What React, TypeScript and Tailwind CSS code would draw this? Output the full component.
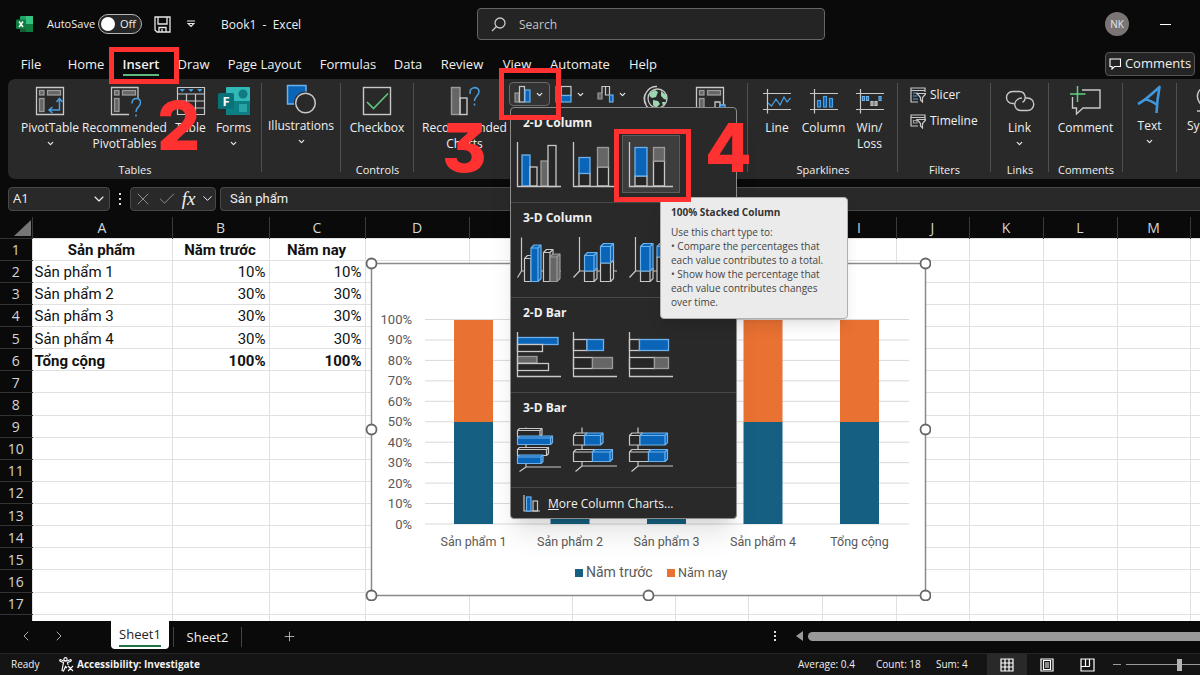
import type { ReactNode } from 'react';
import { ChevronDown, ChevronLeft, ChevronRight, Check, X, Plus } from 'lucide-react';
import { clsx } from 'clsx';

const BLUE = '#0a64b8';
const SKY = '#6db1ec';
const LINE = '#c8c8c8';
const GRAY = '#666666';

const TABS = [
  { label: 'File', width: 'w-[46px]' },
  { label: 'Home', width: 'w-[64px]' },
  { label: 'Insert', width: 'w-[46px]' },
  { label: 'Draw', width: 'w-[59px]' },
  { label: 'Page Layout', width: 'w-[83px]' },
  { label: 'Formulas', width: 'w-[84px]' },
  { label: 'Data', width: 'w-[36px]' },
  { label: 'Review', width: 'w-[72px]' },
  { label: 'View', width: 'w-[38px]' },
  { label: 'Automate', width: 'w-[88px]' },
  { label: 'Help', width: 'w-[38px]' },
];

const COLUMNS = [
  { name: 'A', width: 'w-[140px]' },
  { name: 'B', width: 'w-[97px]' },
  { name: 'C', width: 'w-[96px]' },
  { name: 'D', width: 'w-[104px]' },
  { name: 'E', width: 'w-[103px]' },
  { name: 'F', width: 'w-[103px]' },
  { name: 'G', width: 'w-[73px]' },
  { name: 'H', width: 'w-[74px]' },
  { name: 'I', width: 'w-[74px]' },
  { name: 'J', width: 'w-[73px]' },
  { name: 'K', width: 'w-[74px]' },
  { name: 'L', width: 'w-[74px]' },
  { name: 'M', width: 'w-[73px]' },
  { name: 'N', width: 'w-[74px]' },
];

const CELLS = [
  ['Sản phẩm', 'Năm trước', 'Năm nay'],
  ['Sản phẩm 1', '10%', '10%'],
  ['Sản phẩm 2', '30%', '30%'],
  ['Sản phẩm 3', '30%', '30%'],
  ['Sản phẩm 4', '30%', '30%'],
  ['Tổng cộng', '100%', '100%'],
];

const CATEGORIES = ['Sản phẩm 1', 'Sản phẩm 2', 'Sản phẩm 3', 'Sản phẩm 4', 'Tổng cộng'];

/* ---------- chart type drawings ---------- */

type Tone = 'blue' | 'gray' | 'none';

function paint(tone: Tone) {
  return {
    fill: tone === 'blue' ? BLUE : tone === 'gray' ? GRAY : '#262626',
    stroke: tone === 'blue' ? SKY : tone === 'gray' ? '#9a9a9a' : LINE,
  };
}

type FlatBar = [number, number, number, number, Tone];

function FlatChart({ bars }: { bars: FlatBar[] }) {
  return (
    <svg width="56" height="56" viewBox="0 0 56 56" fill="none" strokeWidth="1.3" aria-hidden="true">
      {bars.map(([x, y, w, h, tone], i) => (
        <rect key={i} x={x} y={y} width={w} height={h} {...paint(tone)} />
      ))}
      <path d="M6.5 6V50.5H50" stroke={LINE} />
    </svg>
  );
}

// [x, y, width, height, depth, tone]
type Block = [number, number, number, number, number, Tone];

function SolidChart({ blocks, axis }: { blocks: Block[]; axis: string }) {
  return (
    <svg width="56" height="56" viewBox="0 0 56 56" fill="none" strokeWidth="1.2" strokeLinejoin="round" aria-hidden="true">
      <path d={axis} stroke={LINE} />
      {blocks.map(([x, y, w, h, d, tone], i) => (
        <g key={i} {...paint(tone)}>
          <path d={`M${x} ${y}l${d} ${-d}h${w}v${h}l${-d} ${d}h${-w}z`} />
          <path d={`M${x} ${y}h${w}v${h}M${x + w} ${y}l${d} ${-d}`} fill="none" />
        </g>
      ))}
    </svg>
  );
}

const COLUMN_AXIS = 'M12.5 6V40H50M12.5 40L6.5 46.5';
const BAR_AXIS = 'M15 6.5V45H50M15 45L8.5 50.5';

const SECTIONS: { title: string; charts: { name: string; art: ReactNode }[] }[] = [
  {
    title: '2-D Column',
    charts: [
      {
        name: 'Clustered Column',
        art: <FlatChart bars={[[11, 19, 8, 31, 'blue'], [19, 31, 7, 19, 'none'], [30, 25, 7, 25, 'gray'], [37, 9.5, 8, 41, 'none']]} />,
      },
      {
        name: 'Stacked Column',
        art: <FlatChart bars={[[12, 37, 11, 13, 'none'], [12, 21.5, 11, 16, 'blue'], [30.5, 31, 11, 19, 'none'], [30.5, 11.5, 11, 19.5, 'gray']]} />,
      },
      {
        name: '100% Stacked Column',
        art: <FlatChart bars={[[12, 40, 12, 10, 'none'], [12, 11.5, 12, 28.5, 'blue'], [30.5, 25, 11, 25, 'none'], [30.5, 11.5, 11, 13.5, 'gray']]} />,
      },
    ],
  },
  {
    title: '3-D Column',
    charts: [
      {
        name: '3-D Clustered Column',
        art: (
          <SolidChart
            axis="M10.5 6.5V40H50M10.5 40L6.5 46.5"
            blocks={[[13.5, 27.5, 6.5, 23, 3, 'none'], [20, 17, 7, 33.5, 3, 'blue'], [32.5, 21.5, 6.5, 29, 3, 'none'], [39, 26, 7, 24.5, 3, 'gray']]}
          />
        ),
      },
      {
        name: '3-D Stacked Column',
        art: (
          <SolidChart
            axis={COLUMN_AXIS}
            blocks={[[17.5, 40, 9.5, 10.5, 3, 'none'], [17.5, 24.5, 9.5, 15.5, 3, 'blue'], [33.5, 32, 10, 18.5, 3, 'none'], [33.5, 15.5, 10, 16.5, 3, 'blue']]}
          />
        ),
      },
      {
        name: '3-D 100% Stacked Column',
        art: (
          <SolidChart
            axis={COLUMN_AXIS}
            blocks={[[17.5, 40, 9.5, 10.5, 3, 'none'], [17.5, 15.5, 9.5, 24.5, 3, 'blue'], [34, 26, 9.5, 24.5, 3, 'none'], [34, 15.5, 9.5, 10.5, 3, 'blue']]}
          />
        ),
      },
    ],
  },
  {
    title: '2-D Bar',
    charts: [
      {
        name: 'Clustered Bar',
        art: <FlatChart bars={[[6.5, 11.5, 40.5, 7, 'blue'], [6.5, 18.5, 25, 7, 'none'], [6.5, 30.5, 19.5, 6.5, 'gray'], [6.5, 37.5, 31, 7, 'none']]} />,
      },
      {
        name: 'Stacked Bar',
        art: <FlatChart bars={[[6.5, 13.5, 13.5, 11, 'none'], [20, 13.5, 16.5, 11, 'blue'], [6.5, 31.5, 19, 11, 'none'], [25.5, 31.5, 20, 11, 'gray']]} />,
      },
      {
        name: '100% Stacked Bar',
        art: <FlatChart bars={[[6.5, 13.5, 10, 11, 'none'], [16.5, 13.5, 29, 11, 'blue'], [6.5, 31.5, 25, 11, 'none'], [31.5, 31.5, 14, 11, 'gray']]} />,
      },
    ],
  },
  {
    title: '3-D Bar',
    charts: [
      {
        name: '3-D Clustered Bar',
        art: (
          <SolidChart
            axis="M15 6.5V46H50M15 46L8.5 50.5"
            blocks={[[6.5, 9.5, 22.5, 6, 2, 'none'], [6.5, 17, 33, 6.5, 2, 'blue'], [6.5, 28.5, 29, 6, 2, 'none'], [6.5, 36, 23.5, 6.5, 2, 'blue']]}
          />
        ),
      },
      {
        name: '3-D Stacked Bar',
        art: (
          <SolidChart
            axis={BAR_AXIS}
            blocks={[[6.5, 14.5, 11, 9.5, 2.5, 'none'], [17.5, 14.5, 16, 9.5, 2.5, 'blue'], [6.5, 31, 19, 9.5, 2.5, 'none'], [25.5, 31, 17.5, 9.5, 2.5, 'blue']]}
          />
        ),
      },
      {
        name: '3-D 100% Stacked Bar',
        art: (
          <SolidChart
            axis={BAR_AXIS}
            blocks={[[6.5, 14.5, 10.5, 9.5, 2.5, 'none'], [17, 14.5, 25, 9.5, 2.5, 'blue'], [6.5, 31, 19, 9.5, 2.5, 'none'], [25.5, 31, 16.5, 9.5, 2.5, 'blue']]}
          />
        ),
      },
    ],
  },
];

/* ---------- ribbon icons ---------- */

function PivotIcon({ question = false, chart = false }: { question?: boolean; chart?: boolean }) {
  return (
    <svg width="32" height="32" viewBox="0 0 32 32" fill="none" stroke={LINE} strokeWidth="1.3" aria-hidden="true">
      <path d={question ? 'M20 29.5H2.5V2.5H29V14' : 'M2.5 2.5H29.5V29.5H2.5z'} />
      <rect x="5.5" y="5.5" width="4.5" height="4.5" fill={GRAY} stroke="#9a9a9a" />
      <rect x="13.5" y="5.5" width="13" height="4.5" fill={GRAY} stroke="#9a9a9a" />
      <rect x="5.5" y="13.5" width="4.5" height="13" fill={GRAY} stroke="#9a9a9a" />
      {!question && !chart && (
        <path d="M25.5 14V25H15.5M22.5 17L25.5 13.5L28.5 17M18.5 22L15 25L18.5 28" stroke="#4a9fe0" strokeWidth="1.5" />
      )}
      {question && (
        <path d="M23 18.5C23 11.5 32 12 31.5 18C31.2 22 27 22 27 27M27 29.5V31.5" stroke="#4a9fe0" strokeWidth="1.5" />
      )}
      {chart && (
        <>
          <path d="M21 30V17H26V30" fill="#292929" />
          <path d="M26 30V20H31V30" fill={BLUE} stroke={SKY} />
        </>
      )}
    </svg>
  );
}

function TableIcon() {
  return (
    <svg width="32" height="32" viewBox="0 0 32 32" fill="none" stroke={LINE} strokeWidth="1.2" aria-hidden="true">
      <path d="M2.5 2.5H29.5V29.5H2.5zM2.5 9H29.5M2.5 16H29.5M2.5 23H29.5M11.5 9V29.5M20.5 9V29.5" />
      <path d="M4.5 4H10L7.2 7zM13.2 4H18.8L16 7zM22 4H27.5L24.8 7z" fill="#4a9fe0" stroke="none" />
    </svg>
  );
}

function FormsIcon() {
  return (
    <svg width="32" height="32" viewBox="0 0 32 32" aria-hidden="true">
      <rect x="8" y="2" width="24" height="28" rx="1" fill="#31b8b8" />
      <path d="M8 16H32V29A1 1 0 0 1 31 30H9A1 1 0 0 1 8 29z" fill="#0b7f84" />
      <circle cx="25" cy="9" r="4.5" fill="#117b80" />
      <rect x="21" y="19" width="8" height="8" fill="#27a3a5" />
      <rect x="0" y="8" width="16" height="16" rx="1.5" fill="#087278" />
      <text x="8" y="20.5" textAnchor="middle" fontSize="13" fontWeight="700" fill="#fff" fontFamily="'Open Sans', sans-serif">F</text>
    </svg>
  );
}

function ShapesIcon() {
  return (
    <svg width="32" height="32" viewBox="0 0 32 32" strokeWidth="1.5" aria-hidden="true">
      <rect x="2.5" y="2.5" width="18.5" height="18.5" fill={BLUE} stroke={SKY} />
      <circle cx="20.5" cy="20" r="11.5" fill="#292929" />
      <circle cx="20.5" cy="20" r="9.8" fill="#292929" stroke={LINE} />
    </svg>
  );
}

function CheckboxIcon() {
  return (
    <svg width="32" height="32" viewBox="0 0 32 32" fill="none" strokeWidth="1.4" aria-hidden="true">
      <rect x="2.5" y="2.5" width="27" height="27" stroke={LINE} />
      <path d="M6 17L12.5 23.5L27 8.5" stroke="#5fc27e" strokeWidth="1.7" />
    </svg>
  );
}

function RecommendedChartsIcon() {
  return (
    <svg width="32" height="32" viewBox="0 0 32 32" fill="none" stroke={LINE} strokeWidth="1.4" aria-hidden="true">
      <rect x="2.5" y="2.5" width="8.5" height="27" fill={GRAY} stroke="#9a9a9a" />
      <rect x="11" y="13" width="7" height="16.5" />
      <path d="M21 9C20 1 30 1 30 6.5C30 11 25.5 11 25.5 16M25.5 18.5V20.5" stroke="#4a9fe0" strokeWidth="1.6" />
    </svg>
  );
}

function SparklineIcon({ kind }: { kind: 'line' | 'column' | 'winloss' }) {
  return (
    <svg width="30" height="32" viewBox="0 0 30 32" fill="none" stroke={LINE} strokeWidth="1.2" aria-hidden="true">
      <path d="M1 8.5H29M1 24.5H29M5.5 4V28.5" />
      {kind === 'line' && <path d="M6 18L9.5 21L14 14L18 20L22 12L25 17L28.5 13" stroke="#4a9fe0" />}
      {kind === 'column' && (
        <g fill={BLUE} stroke="#4a9fe0">
          <rect x="8.5" y="15.5" width="3" height="6.5" />
          <rect x="14.5" y="11.5" width="3" height="10.5" />
          <rect x="20.5" y="13.5" width="3" height="8.5" />
        </g>
      )}
      {kind === 'winloss' && (
        <>
          <path d="M7.5 11.5h2v4h-2zM11.5 11.5h2v4h-2zM24 11.5h2v4h-2z" stroke={SKY} fill={BLUE} />
          <path d="M16 16.5h2v4h-2zM20 16.5h2v4h-2z" fill="#777" />
        </>
      )}
    </svg>
  );
}

function FilterIcon({ blue = false }: { blue?: boolean }) {
  return (
    <svg width="16" height="16" viewBox="0 0 16 16" fill="none" stroke={LINE} strokeWidth="1.2" aria-hidden="true">
      <path d={blue ? 'M8 15H1V1H15V5M1 3.5H15' : 'M8 13H1V2H15V6M1 4.5H15'} />
      <path d={blue ? 'M3 6H8M3 9H7M3 12H8' : 'M3.5 7.5H7V10H3.5z'} stroke={blue ? '#4a9fe0' : '#9a9a9a'} />
      <path d="M7 6.5H16L12.5 10.5V15L10.5 13V10.5z" fill="#292929" />
    </svg>
  );
}

function LinkIcon() {
  return (
    <svg width="32" height="32" viewBox="0 0 32 32" fill="none" stroke={LINE} strokeWidth="1.4" aria-hidden="true">
      <path d="M10.5 18.5H8.5A6 6 0 0 1 8.5 6.5H15.5A6 6 0 0 1 18.5 17.5" />
      <path d="M21.5 13H23.5A6 6 0 0 1 23.5 25.5H16.5A6 6 0 0 1 13.5 14.5C14.5 13.5 16 13 18 13" />
    </svg>
  );
}

function CommentIcon() {
  return (
    <svg width="32" height="32" viewBox="0 0 32 32" fill="none" stroke={LINE} strokeWidth="1.4" aria-hidden="true">
      <path d="M12 5H30V23H13L6.5 29V23H2.5V12" />
      <path d="M7.5 1V17M0 9H15.5" stroke="#5fd07f" strokeWidth="1.5" />
    </svg>
  );
}

function TextIcon() {
  return (
    <svg width="32" height="32" viewBox="0 0 32 32" fill="none" stroke="#3f97dd" strokeWidth="2.6" strokeLinejoin="round" aria-hidden="true">
      <path d="M4 21C10 18 18 11 25.5 4C24 12 23 20 22.5 30M10.5 16.5C15 16.5 19 19 23.5 22" />
    </svg>
  );
}

function OmegaIcon() {
  return (
    <svg width="32" height="32" viewBox="0 0 32 32" fill="none" stroke={LINE} strokeWidth="1.6" aria-hidden="true">
      <path d="M2 28H11V25C-2 18 0 3 16 3S34 18 21 25V28H30" />
    </svg>
  );
}

function GlobeIcon() {
  return (
    <svg width="28" height="28" viewBox="0 0 28 28" fill="none" aria-hidden="true">
      <path d="M4 20A12 12 0 0 1 15 2.5M3 10A12 12 0 0 0 8 25" stroke={LINE} strokeWidth="1.3" />
      <circle cx="15.5" cy="14.5" r="9.5" fill="#292929" stroke={LINE} strokeWidth="1.3" />
      <path d="M8 9L13 6L16 8L14 13L10 14L7.5 12zM19 7L24 11L25 16L22 15L19 12zM11 16L16 17L18 20L14 24L11 21zM20 18L24 18L21 22z" fill="#9bd8ae" />
    </svg>
  );
}

/* ---------- shared pieces ---------- */

function Group({ label, className, children }: { label?: string; className: string; children: ReactNode }) {
  return (
    <section className={clsx('relative flex shrink-0 flex-col', className)}>
      <div className="flex flex-1 items-start">{children}</div>
      <div className="text-center text-[11px] leading-[18px]">{label}</div>
      <span className="absolute top-[4px] right-0 bottom-[7px] w-px bg-[#505050]" />
    </section>
  );
}

interface ToolProps {
  icon: ReactNode;
  label: string;
  second?: string;
  menu?: boolean;
  className: string;
}

function Tool({ icon, label, second, menu, className }: ToolProps) {
  return (
    <button className={clsx('flex shrink-0 flex-col items-center pr-[1px] text-[12px] leading-[16px] whitespace-nowrap', className)}>
      {icon}
      <span className="mt-[3px]">{label}</span>
      {second && <span>{second}</span>}
      {menu && <ChevronDown size={9} strokeWidth={3} className="mt-[3px]" />}
    </button>
  );
}

function TitleBar() {
  return (
    <header className="flex h-[48px] shrink-0 items-center">
      <div className="flex w-[477px] shrink-0 items-center pl-[16px]">
        <svg width="17" height="16" viewBox="0 0 17 16" aria-label="Excel" role="img">
          <rect x="4" width="13" height="16" rx="1" fill="#21a366" />
          <path d="M10 0H16A1 1 0 0 1 17 1V8H10z" fill="#33c481" />
          <path d="M4 8H10V16H5A1 1 0 0 1 4 15z" fill="#185c37" />
          <path d="M10 8H17V15A1 1 0 0 1 16 16H10z" fill="#107c41" />
          <rect y="3.5" width="10" height="9.5" rx="1" fill="#107c41" />
          <path d="M3 5.5L7 11M7 5.5L3 11" stroke="#fff" strokeWidth="1.5" />
        </svg>
        <span className="ml-[14px] w-[51px] text-[11px]">AutoSave</span>
        <button role="switch" aria-checked="false" aria-label="AutoSave" className="flex h-[20px] w-[44px] items-center gap-[5px] rounded-full border border-[#b5b5b5] bg-[#262626] pl-[2px] text-[11px]">
          <span className="size-[14px] rounded-full bg-white" />
          Off
        </button>
        <button aria-label="Save" className="ml-[12px]">
          <svg width="17" height="17" viewBox="0 0 17 17" fill="none" stroke="#e8e8e8" strokeWidth="1.3" aria-hidden="true">
            <path d="M1 1H16V16H3L1 14zM4 1V8H13V1M5 16V11.5H12V16M8 13V16" />
          </svg>
        </button>
        <button aria-label="Customize Quick Access Toolbar" className="ml-[16px]">
          <svg width="8" height="8" viewBox="0 0 8 8" fill="none" stroke="#e8e8e8" strokeWidth="1.2" aria-hidden="true">
            <path d="M0 1H8M1 3.5H7L4 6.5z" />
          </svg>
        </button>
        <span className="ml-[26px] pt-[2px] text-[12px] whitespace-pre">Book1  -  Excel</span>
      </div>
      <label className="flex h-[32px] w-[348px] shrink-0 items-center gap-[13px] rounded-[4px] border border-[#666] bg-[#242424] pl-[13px]">
        <svg width="15" height="15" viewBox="0 0 15 15" fill="none" stroke="#c8c8c8" strokeWidth="1.3" aria-hidden="true">
          <circle cx="9" cy="6" r="5" />
          <path d="M5.5 9.5L1 14" />
        </svg>
        <input aria-label="Search" placeholder="Search" className="min-w-0 flex-1 bg-transparent pt-[2px] text-[12px] outline-none placeholder:text-[#c4c4c4]" />
      </label>
      <div className="ml-auto flex items-center gap-[31px] pr-[29px]">
        <span className="flex size-[24px] items-center justify-center rounded-full bg-[#7a7574] text-[10px] text-[#e8e8e8]">NK</span>
        <button aria-label="Minimize" className="h-[3px] w-[11px]">
          <span className="block h-px bg-white" />
        </button>
      </div>
    </header>
  );
}

function TabRow() {
  return (
    <nav className="flex h-[31px] shrink-0 items-center pl-[8px] text-[13px]">
      {TABS.map(({ label, width }) => {
        const active = label === 'Insert';
        return (
          <button key={label} className={clsx('flex h-[24px] shrink-0 justify-center whitespace-nowrap', width, active && 'font-semibold')}>
            <span className={clsx('h-[24px] leading-[24px]', active && 'border-b-2 border-[#5fb87f]')}>{label}</span>
          </button>
        );
      })}
      <button className="mr-[5px] ml-auto flex h-[24px] w-[90px] shrink-0 items-center justify-center gap-[4px] rounded-[4px] border border-[#555] bg-[#242424]">
        <svg width="12" height="12" viewBox="0 0 12 12" fill="none" stroke="#fff" strokeWidth="1.1" aria-hidden="true">
          <path d="M1 1H11.5V8.5H5.5L3 11V8.5H1z" />
        </svg>
        Comments
      </button>
    </nav>
  );
}

function ChartTooltip() {
  return (
    <div role="tooltip" className="absolute top-[61px] left-[37px] z-30 w-[188px] rounded-[4px] border border-[#b0b0b0] bg-[#ebebeb] px-[10px] pt-[7px] pb-[9px] text-left text-[10px] leading-[14px] whitespace-nowrap text-[#444] shadow-lg">
      <p className="pb-[6px] font-bold text-[#333]">100% Stacked Column</p>
      <p>Use this chart type to:</p>
      <p>• Compare the percentages that</p>
      <p>each value contributes to a total.</p>
      <p>• Show how the percentage that</p>
      <p>each value contributes changes</p>
      <p>over time.</p>
    </div>
  );
}

function ChartMenu() {
  return (
    <div className="absolute top-[25px] left-[1px] z-20 w-[227px] rounded-[4px] border border-[#8c8c8c] bg-[#292929] shadow-xl">
      {SECTIONS.map(({ title, charts }) => (
        <section key={title} className="h-[95px] border-b border-[#484848]">
          <h3 className="h-[28px] pt-[1px] pl-[12px] text-[12px] leading-[28px] font-bold">{title}</h3>
          <div className="flex">
            {charts.map(({ name, art }) => (
              <div key={name} className="relative">
                <button aria-label={name} className={clsx('block size-[56px]', name === '100% Stacked Column' && 'bg-[#3d3d3d] outline outline-[#5c5c5c]')}>
                  {art}
                </button>
                {name === '100% Stacked Column' && <ChartTooltip />}
              </div>
            ))}
          </div>
        </section>
      ))}
      <button className="flex h-[30px] w-full items-center gap-[8px] pl-[12px] text-[12px]">
        <svg width="17" height="17" viewBox="0 0 17 17" fill="none" stroke={LINE} strokeWidth="1.2" aria-hidden="true">
          <path d="M1 0V16H17" />
          <rect x="3.5" y="2" width="4.5" height="14" fill={BLUE} stroke={SKY} />
          <rect x="10" y="6" width="4.5" height="10" />
        </svg>
        <span className="pt-[1px]"><u>M</u>ore Column Charts...</span>
      </button>
    </div>
  );
}

function Ribbon() {
  return (
    <div className="ml-[8px] flex h-[100px] shrink-0 rounded-l-[7px] bg-[#292929]">
      <Group label="Tables" className="w-[254px]">
        <div className="flex pt-[6px] pl-[12px]">
          <Tool className="w-[61px]" icon={<PivotIcon />} label="PivotTable" menu />
          <Tool className="w-[88px]" icon={<PivotIcon question />} label="Recommended" second="PivotTables" />
          <Tool className="w-[44px]" icon={<TableIcon />} label="Table" />
          <Tool className="w-[42px]" icon={<FormsIcon />} label="Forms" menu />
        </div>
      </Group>
      <Group className="w-[79px]">
        <Tool className="w-full pt-[4px]" icon={<ShapesIcon />} label="Illustrations" menu />
      </Group>
      <Group label="Controls" className="w-[73px]">
        <Tool className="w-full pt-[6px]" icon={<CheckboxIcon />} label="Checkbox" />
      </Group>
      <Group className="w-[334px]">
        <Tool className="ml-[7px] w-[88px] pt-[6px]" icon={<RecommendedChartsIcon />} label="Recommended" second="Charts" />
        <div className="relative pt-[3px]">
          <div className="relative">
            <button aria-label="Insert Column or Bar Chart" className="flex h-[24px] w-[41px] items-center justify-center gap-[4px] rounded-[4px] border border-[#6a6a6a] bg-[#333] pr-[2px]">
              <svg width="17" height="18" viewBox="0 0 17 18" fill="none" strokeWidth="1.2" aria-hidden="true">
                <rect x="1" y="8" width="4" height="9" fill={GRAY} stroke="#9a9a9a" />
                <rect x="5.5" y="1.5" width="5" height="15.5" stroke={LINE} />
                <rect x="11" y="5" width="5" height="12" fill={BLUE} stroke={SKY} />
              </svg>
              <ChevronDown size={9} strokeWidth={3} />
            </button>
            <ChartMenu />
          </div>
        </div>
        <div className="flex pt-[3px]">
          <button aria-label="Insert Hierarchy Chart" className="flex h-[24px] w-[42px] items-center justify-center gap-[4px] pr-[3px]">
            <svg width="17" height="18" viewBox="0 0 17 18" fill="none" strokeWidth="1.2" aria-hidden="true">
              <rect x="1" y="1.5" width="5" height="15.5" fill={GRAY} stroke="#9a9a9a" />
              <rect x="6" y="1.5" width="10" height="9" stroke={LINE} />
              <rect x="6" y="10.5" width="10" height="6.5" fill={BLUE} stroke={SKY} />
            </svg>
            <ChevronDown size={9} strokeWidth={3} />
          </button>
          <button aria-label="Insert Waterfall Chart" className="flex h-[24px] w-[42px] items-center justify-center gap-[4px] pr-[3px]">
            <svg width="17" height="18" viewBox="0 0 17 18" fill="none" strokeWidth="1.2" aria-hidden="true">
              <path d="M1 8H5V14H1z" fill={GRAY} stroke="#9a9a9a" />
              <path d="M5 8V1.5H8.5V6M8.5 1.5H12.5V10H8.5z" stroke={LINE} />
              <rect x="12.5" y="10" width="3.5" height="7" fill={BLUE} stroke={SKY} />
            </svg>
            <ChevronDown size={9} strokeWidth={3} />
          </button>
        </div>
        <button aria-label="Maps" className="ml-[8px] pt-[5px]"><GlobeIcon /></button>
        <button aria-label="PivotChart" className="ml-[24px] pt-[6px]"><PivotIcon chart /></button>
      </Group>
      <Group label="Sparklines" className="w-[150px]">
        <div className="flex pt-[6px] pl-[6px]">
          <Tool className="w-[47px]" icon={<SparklineIcon kind="line" />} label="Line" />
          <Tool className="w-[46px]" icon={<SparklineIcon kind="column" />} label="Column" />
          <Tool className="w-[46px]" icon={<SparklineIcon kind="winloss" />} label="Win/" second="Loss" />
        </div>
      </Group>
      <Group label="Filters" className="w-[93px]">
        <div className="flex flex-col gap-[10px] pt-[8px] pl-[12px] text-[12px] leading-[16px]">
          <button className="flex items-center gap-[4px]"><FilterIcon blue />Slicer</button>
          <button className="flex items-center gap-[4px]"><FilterIcon />Timeline</button>
        </div>
      </Group>
      <Group label="Links" className="w-[58px]">
        <Tool className="w-full pt-[6px]" icon={<LinkIcon />} label="Link" menu />
      </Group>
      <Group label="Comments" className="w-[74px]">
        <Tool className="w-full pt-[6px]" icon={<CommentIcon />} label="Comment" />
      </Group>
      <Group className="w-[54px]">
        <Tool className="w-full pt-[4px]" icon={<TextIcon />} label="Text" menu />
      </Group>
      <Group className="w-[68px]">
        <Tool className="w-full pt-[4px]" icon={<OmegaIcon />} label="Symbols" menu />
      </Group>
    </div>
  );
}

function FormulaBar() {
  return (
    <div className="flex h-[38px] shrink-0 items-center pt-[1px] pl-[8px] text-[13px]">
      <label className="flex h-[24px] w-[102px] shrink-0 items-center rounded-[4px] border border-[#484848] bg-[#292929] pr-[2px] pl-[4px]">
        <input aria-label="Name Box" defaultValue="A1" className="min-w-0 flex-1 bg-transparent text-[13px] outline-none" />
        <ChevronDown size={16} strokeWidth={1.6} />
      </label>
      <span className="mx-[9px] flex w-[2px] flex-col gap-[3px]">
        <i className="size-[2px] bg-[#ddd]" />
        <i className="size-[2px] bg-[#ddd]" />
        <i className="size-[2px] bg-[#ddd]" />
      </span>
      <div className="flex h-[24px] w-[86px] shrink-0 items-center justify-between rounded-[4px] border border-[#484848] bg-[#292929] pl-[2px]">
        <button aria-label="Cancel"><X size={20} strokeWidth={1.2} color="#8c8c8c" /></button>
        <button aria-label="Enter"><Check size={20} strokeWidth={1.2} color="#8c8c8c" /></button>
        <button aria-label="Insert Function" className="font-['Liberation_Serif',serif] text-[19px] leading-[20px] italic">fx</button>
        <ChevronDown size={15} strokeWidth={1.6} />
      </div>
      <input
        aria-label="Formula Bar"
        defaultValue="Sản phẩm"
        className="ml-[4px] h-[24px] min-w-0 flex-1 rounded-l-[4px] border border-r-0 border-[#484848] bg-[#292929] pl-[9px] font-['Roboto','Noto_Sans',sans-serif] text-[13px] outline-none"
      />
    </div>
  );
}

function StackedChart() {
  const ticks = [100, 90, 80, 70, 60, 50, 40, 30, 20, 10, 0];
  return (
    <svg width="566" height="344" viewBox="-6 -6 566 344" className="absolute top-[40px] left-[365px] font-['Roboto','Noto_Sans',sans-serif]" role="img" aria-label="100% stacked column chart">
      <rect x="0.5" y="0.5" width="554" height="332" fill="#fff" stroke="#8a8a8a" strokeWidth="1.5" />
      {ticks.map((tick, i) => (
        <g key={tick}>
          <path d={`M54 ${56.5 + i * 20.45}H538`} stroke="#d9d9d9" />
          <text x="41" y={61 + i * 20.45} textAnchor="end" fontSize="13" fill="#595959">{tick}%</text>
        </g>
      ))}
      {CATEGORIES.map((name, i) => (
        <g key={name}>
          <rect x={83 + i * 96.5} y="57" width="39" height="102" fill="#e97132" />
          <rect x={83 + i * 96.5} y="159" width="39" height="102" fill="#156082" />
          <text x={102.5 + i * 96.5} y="283" textAnchor="middle" fontSize="12.5" fill="#595959">{name}</text>
        </g>
      ))}
      <rect x="204" y="306" width="8" height="8" fill="#156082" />
      <text x="215" y="314" fontSize="14" fill="#595959">Năm trước</text>
      <rect x="296" y="306" width="8" height="8" fill="#e97132" />
      <text x="307" y="314" fontSize="12.5" fill="#595959">Năm nay</text>
      {[[0, 0], [277, 0], [554, 0], [0, 166], [554, 166], [0, 332], [277, 332], [554, 332]].map(([x, y]) => (
        <circle key={`${x}-${y}`} cx={x + 0.5} cy={y + 0.5} r="5" fill="#fff" stroke="#666" strokeWidth="1.8" />
      ))}
    </svg>
  );
}

function Sheet() {
  return (
    <main className="relative min-h-0 flex-1 overflow-hidden bg-white">
      <table className="h-[420px] w-[1264px] table-fixed border-collapse font-['Roboto','Noto_Sans',sans-serif] text-[15px] leading-[18px] text-[#111]">
        <thead className="bg-[#0a0a0a] text-[#d6d6d6]">
          <tr className="h-[21px]">
            <th className="w-[32px] p-0" aria-label="Select all">
              <svg width="18" height="17" viewBox="0 0 18 17" className="mt-[2px] ml-auto" aria-hidden="true">
                <path d="M17 0V16H0z" fill="#757575" />
              </svg>
            </th>
            {COLUMNS.map(({ name, width }) => (
              <th key={name} scope="col" className={clsx('border-x border-[#3a3a3a] p-0 pt-[2px] font-["Open_Sans",sans-serif] text-[14px] font-normal', width)}>{name}</th>
            ))}
          </tr>
        </thead>
        <tbody>
          {Array.from({ length: 18 }, (_, row) => (
            <tr key={row}>
              <th scope="row" className="border-y border-[#333] bg-[#0a0a0a] p-0 pt-[2px] font-['Open_Sans',sans-serif] text-[14px] font-normal text-[#d6d6d6]">
                {row < 17 ? row + 1 : '\u00a0'}
              </th>
              {COLUMNS.map(({ name }, col) => (
                <td
                  key={name}
                  className={clsx(
                    'border border-[#e1e1e1] pt-[2px] pr-[3px] pb-0 pl-[2px] whitespace-nowrap',
                    (row === 0 || row === 5) && 'font-bold',
                    row === 0 ? 'text-center' : col > 0 && 'text-right',
                  )}
                >
                  {CELLS[row]?.[col]}
                </td>
              ))}
            </tr>
          ))}
        </tbody>
      </table>
      <StackedChart />
    </main>
  );
}

function SheetTabs() {
  return (
    <div className="flex h-[32px] shrink-0 items-start text-[14px]">
      <div className="flex h-[30px] w-[111px] shrink-0 items-center gap-[17px] pl-[18px] text-[#aaa]">
        <button aria-label="Previous sheet"><ChevronLeft size={16} strokeWidth={1.5} /></button>
        <button aria-label="Next sheet"><ChevronRight size={16} strokeWidth={1.5} /></button>
      </div>
      <button className="flex h-[28px] w-[58px] shrink-0 justify-center rounded-b-[4px] bg-white text-[13px] font-medium text-[#222]">
        <span className="h-[26px] border-b-2 border-[#217346] leading-[26px]">Sheet1</span>
      </button>
      <button className="mt-[6px] ml-[4px] h-[20px] w-[69px] shrink-0 border-x border-[#444] text-[13px] leading-[20px]">Sheet2</button>
      <button aria-label="New sheet" className="mt-[8px] ml-[40px] text-[#ccc]"><Plus size={15} strokeWidth={1.3} /></button>
      <div className="ml-auto flex h-[30px] items-center">
        <span className="mr-[20px] flex flex-col gap-[2px]">
          <i className="size-[2px] bg-[#ddd]" />
          <i className="size-[2px] bg-[#ddd]" />
          <i className="size-[2px] bg-[#ddd]" />
        </span>
        <button aria-label="Scroll left">
          <svg width="7" height="10" viewBox="0 0 7 10" aria-hidden="true"><path d="M7 0V10L0 5z" fill="#999" /></svg>
        </button>
        <div className="ml-[5px] h-[9px] w-[392px] rounded-l-full bg-[#999]" />
      </div>
    </div>
  );
}

function StatusBar() {
  return (
    <footer className="flex h-[22px] shrink-0 items-center border-t border-[#262626] bg-[#141414] pl-[11px] text-[10px] whitespace-nowrap">
      <span className="w-[48px] shrink-0">Ready</span>
      <button className="flex items-center gap-[3px] font-bold">
        <svg width="15" height="15" viewBox="0 0 15 15" fill="none" stroke="#fff" strokeWidth="1.1" aria-hidden="true">
          <circle cx="6.5" cy="2.2" r="1.6" />
          <path d="M1 2.5C0 4 1.5 4.5 4.5 5.5L3 13.5L4.5 14L6.5 9.5L8 11M12 2.5C13 4 11.5 4.5 8.5 5.5L9 8M1 2.5L5 4H8L12 2.5M9 9L14 14M14 9L9 14" />
        </svg>
        Accessibility: Investigate
      </button>
      <div className="ml-auto flex h-full shrink-0 items-center">
        <span className="w-[78px]">Average: 0.4</span>
        <span className="w-[60px]">Count: 18</span>
        <span className="w-[51px]">Sum: 4</span>
        <button aria-label="Normal view" className="flex h-full w-[40px] items-center justify-center bg-[#292929]">
          <svg width="14" height="14" viewBox="0 0 14 14" fill="none" stroke="#fff" strokeWidth="1.2" aria-hidden="true">
            <path d="M1 1H13V13H1zM1 5H13M1 9H13M5 1V13M9 1V13" />
          </svg>
        </button>
        <button aria-label="Page layout view" className="flex h-full w-[40px] items-center justify-center">
          <svg width="14" height="14" viewBox="0 0 14 14" fill="none" stroke="#fff" strokeWidth="1.2" aria-hidden="true">
            <path d="M1 1H13V13H1zM3.5 2.5H10.5V11.5H3.5zM5 5H9M5 7H9M5 9H9" />
          </svg>
        </button>
        <button aria-label="Page break preview" className="flex h-full w-[40px] items-center justify-center">
          <svg width="15" height="14" viewBox="0 0 15 14" fill="none" stroke="#fff" strokeWidth="1.2" aria-hidden="true">
            <path d="M1 1H14V13H1zM5.5 1V8.5M5.5 8.5H9.5M9.5 1V8.5M1 8.5H5.5" />
          </svg>
        </button>
        <button aria-label="Zoom out" className="ml-[6px] w-[8px]"><span className="block h-px bg-[#999]" /></button>
        <div className="ml-[5px] flex w-[74px] overflow-hidden">
          <input
            type="range"
            aria-label="Zoom"
            defaultValue={50}
            className="h-[12px] w-[106px] shrink-0 appearance-none bg-[linear-gradient(#999,#999)] bg-[length:100%_1px] bg-center bg-no-repeat [&::-webkit-slider-thumb]:h-[12px] [&::-webkit-slider-thumb]:w-[5px] [&::-webkit-slider-thumb]:appearance-none [&::-webkit-slider-thumb]:bg-[#b5b5b5]"
          />
        </div>
      </div>
    </footer>
  );
}

/* Step markers drawn over the window */
function Annotations() {
  return (
    <div className="pointer-events-none absolute inset-0 z-40 font-['Inter',sans-serif] text-[68px] leading-none font-extrabold text-[#ff3131]">
      <span className="absolute top-[47px] left-[109px] h-[37px] w-[70px] border-[5px] border-[#ff3131]" />
      <span className="absolute top-[68px] left-[499px] h-[52px] w-[62px] border-[5px] border-[#ff3131]" />
      <span className="absolute top-[129px] left-[614px] h-[73px] w-[77px] border-[5px] border-[#ff3131]" />
      <span className="absolute top-[91px] left-[157px]">2</span>
      <span className="absolute top-[113px] left-[442px] [font-feature-settings:'cv09']">3</span>
      <span className="absolute top-[113px] left-[705px]">4</span>
    </div>
  );
}

export default function App() {
  return (
    <div className="relative flex h-screen flex-col overflow-hidden bg-[#0a0a0a] font-['Open_Sans','Noto_Sans',sans-serif] text-[#f0f0f0]">
      <TitleBar />
      <TabRow />
      <Ribbon />
      <FormulaBar />
      <Sheet />
      <SheetTabs />
      <StatusBar />
      <Annotations />
    </div>
  );
}
